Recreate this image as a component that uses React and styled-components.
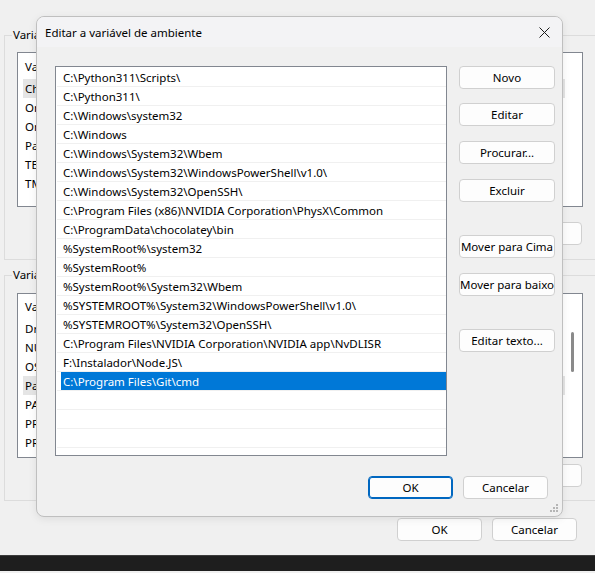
import React from "react";
import styled, { createGlobalStyle } from "styled-components";

const Global = createGlobalStyle`
  html, body { margin: 0; padding: 0; overflow: hidden; background: #f0f0f0; }
  * { box-sizing: border-box; }
`;

const FONT = `"Noto Sans", "Open Sans", sans-serif`;

const Page = styled.div`
  position: relative;
  width: 595px;
  height: 573px;
  overflow: hidden;
  background: #f0f0f0;
  font-family: ${FONT};
  font-size: 11.5px;
  color: #000;
  display: flex;
  flex-direction: column;
  padding-top: 35px;
`;

const Group = styled.div`
  position: relative;
  margin-left: 4px;
  margin-top: ${(p) => p.$mt || 0}px;
  width: 592px;
  border: 1px solid #dcdcdc;
  padding: ${(p) => p.$pt}px 12px ${(p) => p.$pb}px 12px;
  display: flex;
  flex-direction: column;
`;

const GroupLabel = styled.span`
  position: absolute;
  left: 7px;
  top: -10px;
  padding: 0 1px;
  background: #f0f0f0;
  line-height: 17px;
`;

const BgList = styled.div`
  height: ${(p) => p.$h}px;
  border: 1px solid #828790;
  background: #fff;
  position: relative;
  overflow: hidden;
`;

const BgHeader = styled.div`
  height: ${(p) => p.$h}px;
  padding-left: 7px;
  display: flex;
  align-items: center;
`;

const BgRow = styled.div`
  height: 19px;
  width: 542px;
  margin-left: 5px;
  padding-left: 2px;
  display: flex;
  align-items: center;
  white-space: nowrap;
  background: ${(p) => (p.$hl ? "#e5e5e5" : "transparent")};
`;

const ScrollThumb = styled.div`
  position: absolute;
  right: 8px;
  top: 38px;
  width: 3px;
  height: 40px;
  border-radius: 2px;
  background: #8a8a8a;
`;

const BgButtons = styled.div`
  margin-top: ${(p) => p.$mt}px;
  display: flex;
  justify-content: flex-end;
  gap: 8px;
  padding-right: 1px;
`;

const WinButton = styled.button`
  width: ${(p) => p.$w || 85}px;
  height: 23px;
  padding: 0;
  font-family: ${FONT};
  font-size: 11.5px;
  color: #000;
  background: #fdfdfd;
  border: 1px solid ${(p) => (p.$primary ? "#0067c0" : "#d0d0d0")};
  box-shadow: ${(p) => (p.$primary ? "inset 0 0 0 1px #0067c0" : "none")};
  border-radius: 4px;
  white-space: nowrap;
  display: flex;
  align-items: center;
  justify-content: center;
`;

const Footer = styled.div`
  margin-top: 17px;
  display: flex;
  justify-content: flex-end;
  gap: 10px;
  padding-right: 18px;
`;

const Taskbar = styled.div`
  margin-top: 14px;
  height: 16px;
  background: #1e1e1e;
  border-top: 1px solid #3c3c3c;
`;

/* Dialog */
const Dialog = styled.div`
  position: absolute;
  left: 36px;
  top: 16px;
  width: 527px;
  height: 501px;
  background: #f0f0f0;
  border: 1px solid #bfbfbf;
  border-radius: 8px;
  box-shadow: 0 2px 8px rgba(0, 0, 0, 0.08);
  display: flex;
  flex-direction: column;
  overflow: hidden;
`;

const TitleBar = styled.div`
  height: 30px;
  background: #f3f3f5;
  display: flex;
  align-items: center;
  justify-content: space-between;
  padding: 0 8px 0 8px;
  flex: none;
`;

const Title = styled.span`
  font-size: 11.5px;
`;

const CloseBtn = styled.div`
  width: 20px;
  height: 20px;
  display: flex;
  align-items: center;
  justify-content: center;
`;

const DialogBody = styled.div`
  display: flex;
  padding: 19px 0 0 18px;
  gap: 12px;
`;

const PathList = styled.div`
  width: 392px;
  height: 390px;
  border: 1px solid #828790;
  background: #fff;
  overflow: hidden;
  padding: 1px 0 0 0;
`;

const PathRow = styled.div`
  height: 19px;
  margin: 0 0 0 1px;
  border-bottom: 1px solid #f0f0f0;
  display: flex;
`;

const PathCell = styled.div`
  flex: 1;
  margin-left: 4px;
  padding-left: 2px;
  display: flex;
  align-items: center;
  white-space: nowrap;
  background: ${(p) => (p.$sel ? "#0078d7" : "transparent")};
  color: ${(p) => (p.$sel ? "#fff" : "#000")};
`;

const ButtonCol = styled.div`
  display: flex;
  flex-direction: column;
`;

const ColButton = styled(WinButton)`
  margin-top: ${(p) => p.$mt || 0}px;
`;

const DialogFooter = styled.div`
  margin-top: 20px;
  display: flex;
  justify-content: flex-end;
  gap: 10px;
  padding-right: 14px;
`;

const Grip = styled.svg`
  position: absolute;
  right: 3px;
  bottom: 3px;
`;

const paths = [
  "C:\\Python311\\Scripts\\",
  "C:\\Python311\\",
  "C:\\Windows\\system32",
  "C:\\Windows",
  "C:\\Windows\\System32\\Wbem",
  "C:\\Windows\\System32\\WindowsPowerShell\\v1.0\\",
  "C:\\Windows\\System32\\OpenSSH\\",
  "C:\\Program Files (x86)\\NVIDIA Corporation\\PhysX\\Common",
  "C:\\ProgramData\\chocolatey\\bin",
  "%SystemRoot%\\system32",
  "%SystemRoot%",
  "%SystemRoot%\\System32\\Wbem",
  "%SYSTEMROOT%\\System32\\WindowsPowerShell\\v1.0\\",
  "%SYSTEMROOT%\\System32\\OpenSSH\\",
  "C:\\Program Files\\NVIDIA Corporation\\NVIDIA app\\NvDLISR",
  "F:\\Instalador\\Node.JS\\",
  "C:\\Program Files\\Git\\cmd",
  "",
  "",
  "",
  "",
];

const userVars = ["ChocolateyLastPathUpdate", "OneDrive", "OneDriveConsumer", "Path", "TEMP", "TMP"];
const sysVars = ["DriverData", "NUMBER_OF_PROCESSORS", "OS", "Path", "PATHEXT", "PROCESSOR_ARCHITECTURE", "PROCESSOR_IDENTIFIER"];

export default function App() {
  return (
    <>
      <Global />
      <Page>
        <Group $pt={16} $pb={14}>
          <GroupLabel>Variáveis de usuário para User</GroupLabel>
          <BgList $h={155}>
            <BgHeader $h={26}>Variável</BgHeader>
            {userVars.map((v, i) => (
              <BgRow key={v} $hl={i === 0}>{v}</BgRow>
            ))}
          </BgList>
          <BgButtons $mt={15}>
            <WinButton>Novo...</WinButton>
            <WinButton>Editar...</WinButton>
            <WinButton>Excluir</WinButton>
          </BgButtons>
        </Group>
        <Group $mt={15} $pt={17} $pb={13}>
          <GroupLabel>Variáveis do sistema</GroupLabel>
          <BgList $h={165}>
            <BgHeader $h={25}>Variável</BgHeader>
            {sysVars.map((v, i) => (
              <BgRow key={v} $hl={i === 3}>{v}</BgRow>
            ))}
            <ScrollThumb />
          </BgList>
          <BgButtons $mt={6}>
            <WinButton>Novo...</WinButton>
            <WinButton>Editar...</WinButton>
            <WinButton>Excluir</WinButton>
          </BgButtons>
        </Group>
        <Footer>
          <WinButton>OK</WinButton>
          <WinButton>Cancelar</WinButton>
        </Footer>
        <Taskbar />

        <Dialog>
          <TitleBar>
            <Title>Editar a variável de ambiente</Title>
            <CloseBtn>
              <svg width="11" height="11" viewBox="0 0 11 11">
                <path d="M0.5 0.5 L10.5 10.5 M10.5 0.5 L0.5 10.5" stroke="#1a1a1a" strokeWidth="1" fill="none" />
              </svg>
            </CloseBtn>
          </TitleBar>
          <DialogBody>
            <PathList>
              {paths.map((p, i) => (
                <PathRow key={i}>
                  <PathCell $sel={i === 16}>{p}</PathCell>
                </PathRow>
              ))}
            </PathList>
            <ButtonCol>
              <ColButton $w={96}>Novo</ColButton>
              <ColButton $w={96} $mt={14}>Editar</ColButton>
              <ColButton $w={96} $mt={15}>Procurar...</ColButton>
              <ColButton $w={96} $mt={15}>Excluir</ColButton>
              <ColButton $w={96} $mt={33}>Mover para Cima</ColButton>
              <ColButton $w={96} $mt={15}>Mover para baixo</ColButton>
              <ColButton $w={96} $mt={33}>Editar texto...</ColButton>
            </ButtonCol>
          </DialogBody>
          <DialogFooter>
            <WinButton $primary>OK</WinButton>
            <WinButton>Cancelar</WinButton>
          </DialogFooter>
          <Grip width="10" height="10" viewBox="0 0 10 10">
            {[[8, 2], [5, 5], [8, 5], [2, 8], [5, 8], [8, 8]].map(([x, y], i) => (
              <rect key={i} x={x - 1} y={y - 1} width="2" height="2" fill="#b5b5b5" />
            ))}
          </Grip>
        </Dialog>
      </Page>
    </>
  );
}
